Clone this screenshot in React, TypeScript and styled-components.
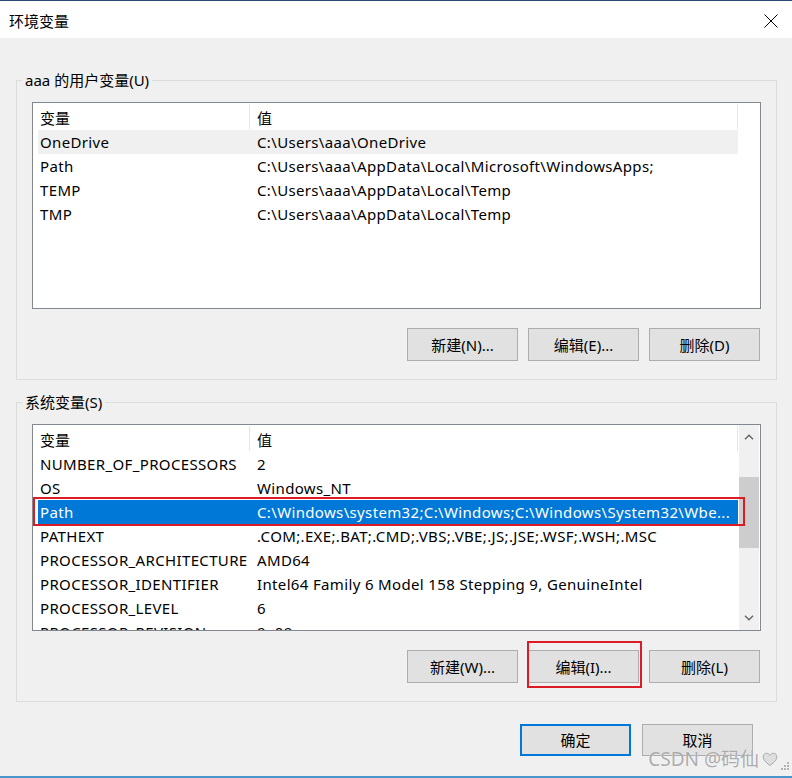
import React from 'react';
import styled, { createGlobalStyle, css } from 'styled-components';

const GlobalStyle = createGlobalStyle`
  * {
    box-sizing: border-box;
  }

  html,
  body {
    margin: 0;
    padding: 0;
    background: #f0f0f0;
  }

  body {
    font-family: "Noto Sans", "Noto Sans CJK SC", sans-serif;
    font-size: 15px;
    color: #000;
  }
`;

const Window = styled.div`
  position: relative;
  width: 792px;
  height: 778px;
  display: flex;
  flex-direction: column;
  background: #f0f0f0;
  border-top: 1px solid #2b4a73;
  border-bottom: 2px solid #4896cc;
  overflow: hidden;
`;

const TitleBar = styled.div`
  flex: none;
  height: 37px;
  display: flex;
  align-items: center;
  justify-content: space-between;
  padding: 2px 0 0 9px;
  background: #fff;
`;

const Title = styled.span`
  font-size: 15px;
  line-height: 20px;
`;

const CloseButton = styled.div`
  width: 42px;
  height: 35px;
  display: flex;
  align-items: center;
  justify-content: center;
`;

const Body = styled.div`
  flex: 1;
  display: flex;
  flex-direction: column;
  padding: 32px 15px 0 16px;
`;

const GroupBox = styled.fieldset`
  margin: 0;
  padding: 0;
  min-width: 0;
  border: 1px solid #dcdcdc;

  & + & {
    margin-top: 12px;
  }
`;

const Legend = styled.legend`
  margin-left: 5px;
  padding: 0 3px;
  font-size: 15px;
  line-height: 20px;
`;

const GroupContent = styled.div`
  padding: 12px 15px 18px;
`;

const ListFrame = styled.div`
  display: flex;
  height: 207px;
  border: 1px solid #828790;
  background: #fff;
  overflow: hidden;
`;

const Table = styled.div`
  flex: none;
  width: 705px;
  padding-left: 5px;
`;

const HeaderRow = styled.div`
  display: grid;
  grid-template-columns: 212px 1fr;
  height: 27px;
`;

const HeaderCell = styled.div<{ $value?: boolean }>`
  height: 25px;
  margin: 1px 0;
  padding: 2px 0 0 ${p => (p.$value ? 7 : 2)}px;
  line-height: 24px;
  border-right: 1px solid #e5e5e5;
`;

const Row = styled.div<{ $state?: 'selected' | 'inactive'; $marked?: boolean }>`
  position: relative;
  display: grid;
  grid-template-columns: 212px 1fr;
  height: 24px;
  line-height: 24px;
  letter-spacing: 0.35px;
  white-space: nowrap;

  ${p =>
    p.$state === 'inactive' &&
    css`
      background: #f0f0f0;
    `}

  ${p =>
    p.$state === 'selected' &&
    css`
      background: #0078d7;
      color: #fff;
    `}

  ${p =>
    p.$marked &&
    css`
      &::after {
        content: '';
        position: absolute;
        top: -3px;
        left: -5px;
        right: -7px;
        bottom: -2px;
        border: 2px solid #dc1c24;
      }
    `}
`;

const Cell = styled.div<{ $value?: boolean }>`
  padding-left: ${p => (p.$value ? 7 : 2)}px;
  overflow: hidden;
`;

const ScrollBar = styled.div`
  flex: 1;
  display: flex;
  flex-direction: column;
  margin: 0 1px;
  background: #f0f0f0;
`;

const ScrollArrow = styled.div`
  flex: none;
  height: 24px;
  display: flex;
  align-items: center;
  justify-content: center;
`;

const ScrollTrack = styled.div`
  flex: 1;
`;

const ScrollThumb = styled.div<{ $top: number; $height: number }>`
  margin-top: ${p => p.$top}px;
  height: ${p => p.$height}px;
  background: #cdcdcd;
`;

const ButtonRow = styled.div`
  display: flex;
  justify-content: flex-end;
  gap: 10px;
  margin-top: 19px;
  padding-right: 1px;
`;

const Button = styled.button<{ $default?: boolean; $marked?: boolean; $height?: number }>`
  position: relative;
  width: 111px;
  height: ${p => p.$height ?? 33}px;
  padding: 0;
  background: #e1e1e1;
  border: 1px solid #adadad;
  border-radius: 0;
  font-family: inherit;
  font-size: 15px;
  line-height: 20px;
  color: #000;

  ${p =>
    p.$default &&
    css`
      border: 2px solid #0078d7;
    `}

  ${p =>
    p.$marked &&
    css`
      &::after {
        content: '';
        position: absolute;
        top: -10px;
        left: -2px;
        right: -4px;
        bottom: -6px;
        border: 2px solid #dc1c24;
      }
    `}
`;

const Footer = styled.div`
  display: flex;
  justify-content: flex-end;
  gap: 11px;
  margin-top: 22px;
  padding-right: 24px;
`;

const Watermark = styled.div`
  position: absolute;
  right: 14px;
  bottom: 6px;
  display: flex;
  align-items: center;
  gap: 3px;
  font-size: 19px;
  line-height: 22px;
  color: rgba(150, 150, 150, 0.8);
  text-shadow: 0 0 1px rgba(255, 255, 255, 0.9);
  pointer-events: none;
`;

const SizeGrip = styled.svg`
  position: absolute;
  right: 2px;
  bottom: 3px;
`;

type Variable = {
  name: string;
  value: string;
  state?: 'selected' | 'inactive';
  marked?: boolean;
};

const userVars: Variable[] = [
  { name: 'OneDrive', value: 'C:\\Users\\aaa\\OneDrive', state: 'inactive' },
  { name: 'Path', value: 'C:\\Users\\aaa\\AppData\\Local\\Microsoft\\WindowsApps;' },
  { name: 'TEMP', value: 'C:\\Users\\aaa\\AppData\\Local\\Temp' },
  { name: 'TMP', value: 'C:\\Users\\aaa\\AppData\\Local\\Temp' },
];

const systemVars: Variable[] = [
  { name: 'NUMBER_OF_PROCESSORS', value: '2' },
  { name: 'OS', value: 'Windows_NT' },
  {
    name: 'Path',
    value: 'C:\\Windows\\system32;C:\\Windows;C:\\Windows\\System32\\Wbe...',
    state: 'selected',
    marked: true,
  },
  { name: 'PATHEXT', value: '.COM;.EXE;.BAT;.CMD;.VBS;.VBE;.JS;.JSE;.WSF;.WSH;.MSC' },
  { name: 'PROCESSOR_ARCHITECTURE', value: 'AMD64' },
  { name: 'PROCESSOR_IDENTIFIER', value: 'Intel64 Family 6 Model 158 Stepping 9, GenuineIntel' },
  { name: 'PROCESSOR_LEVEL', value: '6' },
  { name: 'PROCESSOR_REVISION', value: '9e09' },
];

const Chevron: React.FC<{ down?: boolean }> = ({ down }) => (
  <svg width="10" height="6" viewBox="0 0 10 6">
    <path
      d={down ? 'M1 0.8 L5 4.8 L9 0.8' : 'M1 5.2 L5 1.2 L9 5.2'}
      fill="none"
      stroke="#606060"
      strokeWidth="1.3"
    />
  </svg>
);

const VariableList: React.FC<{ vars: Variable[]; scrollable?: boolean }> = ({ vars, scrollable }) => (
  <ListFrame>
    <Table>
      <HeaderRow>
        <HeaderCell>变量</HeaderCell>
        <HeaderCell $value>值</HeaderCell>
      </HeaderRow>
      {vars.map(v => (
        <Row key={v.name} $state={v.state} $marked={v.marked}>
          <Cell>{v.name}</Cell>
          <Cell $value>{v.value}</Cell>
        </Row>
      ))}
    </Table>
    {scrollable && (
      <ScrollBar>
        <ScrollArrow>
          <Chevron />
        </ScrollArrow>
        <ScrollTrack>
          <ScrollThumb $top={28} $height={71} />
        </ScrollTrack>
        <ScrollArrow>
          <Chevron down />
        </ScrollArrow>
      </ScrollBar>
    )}
  </ListFrame>
);

const App: React.FC = () => (
  <>
    <GlobalStyle />
    <Window>
      <TitleBar>
        <Title>环境变量</Title>
        <CloseButton>
          <svg width="14" height="14" viewBox="0 0 14 14">
            <path d="M0.5 0.5 L13.5 13.5 M13.5 0.5 L0.5 13.5" stroke="#000" strokeWidth="1" />
          </svg>
        </CloseButton>
      </TitleBar>

      <Body>
        <GroupBox>
          <Legend>aaa 的用户变量(U)</Legend>
          <GroupContent>
            <VariableList vars={userVars} />
            <ButtonRow>
              <Button>新建(N)...</Button>
              <Button>编辑(E)...</Button>
              <Button>删除(D)</Button>
            </ButtonRow>
          </GroupContent>
        </GroupBox>

        <GroupBox>
          <Legend>系统变量(S)</Legend>
          <GroupContent>
            <VariableList vars={systemVars} scrollable />
            <ButtonRow>
              <Button>新建(W)...</Button>
              <Button $marked>编辑(I)...</Button>
              <Button>删除(L)</Button>
            </ButtonRow>
          </GroupContent>
        </GroupBox>

        <Footer>
          <Button $default $height={32}>确定</Button>
          <Button $height={32}>取消</Button>
        </Footer>
      </Body>

      <Watermark>
        <span>CSDN @码仙</span>
        <svg width="16" height="15" viewBox="0 0 20 18">
          <path
            d="M10 16.5 C4 12 1.5 9 1.5 5.5 C1.5 3 3.5 1.2 5.8 1.2 C7.6 1.2 9 2.3 10 3.8 C11 2.3 12.4 1.2 14.2 1.2 C16.5 1.2 18.5 3 18.5 5.5 C18.5 9 16 12 10 16.5 Z"
            fill="#dedede"
            stroke="#a4a4a4"
            strokeWidth="1.2"
          />
        </svg>
      </Watermark>

      <SizeGrip width="12" height="12" viewBox="0 0 12 12">
        <g fill="#b4b4b4">
          <rect x="9" y="1" width="2" height="2" />
          <rect x="6" y="4" width="2" height="2" />
          <rect x="9" y="4" width="2" height="2" />
          <rect x="3" y="7" width="2" height="2" />
          <rect x="6" y="7" width="2" height="2" />
          <rect x="9" y="7" width="2" height="2" />
        </g>
      </SizeGrip>
    </Window>
  </>
);

export default App;
